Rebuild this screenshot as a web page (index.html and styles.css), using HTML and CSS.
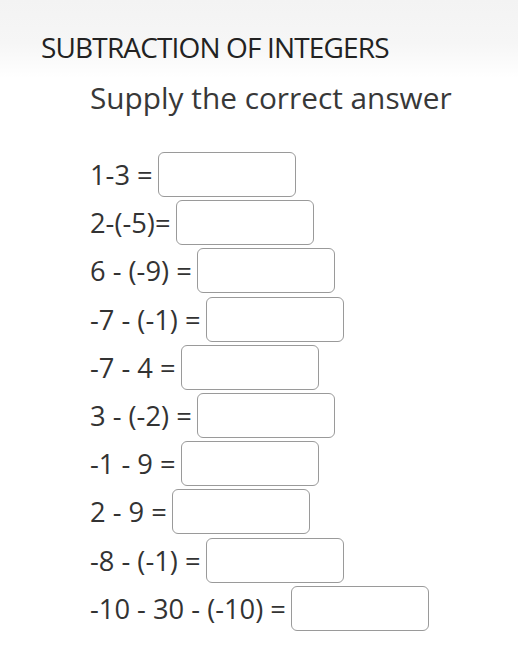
FILE: index.html
```html
<!DOCTYPE html>
<html>
<head>
<meta charset="utf-8">
<link rel="stylesheet" href="styles.css">
</head>
<body>
<div class="banner">
  <h1 class="title">SUBTRACTION OF INTEGERS</h1>
</div>
<div class="content">
  <h2 class="subtitle">Supply the correct answer</h2>
  <div class="rows">
    <div class="row"><span class="label">1-3 =</span><input class="answer" type="text"></div>
    <div class="row"><span class="label">2-(-5)=</span><input class="answer" type="text"></div>
    <div class="row"><span class="label">6 - (-9) =</span><input class="answer" type="text"></div>
    <div class="row"><span class="label">-7 - (-1) =</span><input class="answer" type="text"></div>
    <div class="row"><span class="label">-7 - 4 =</span><input class="answer" type="text"></div>
    <div class="row"><span class="label">3 - (-2) =</span><input class="answer" type="text"></div>
    <div class="row"><span class="label">-1 - 9 =</span><input class="answer" type="text"></div>
    <div class="row"><span class="label">2 - 9 =</span><input class="answer" type="text"></div>
    <div class="row"><span class="label">-8 - (-1) =</span><input class="answer" type="text"></div>
    <div class="row"><span class="label">-10 - 30 - (-10) =</span><input class="answer" type="text"></div>
  </div>
</div>
</body>
</html>
```
FILE: styles.css
```css
html, body {
  margin: 0;
  padding: 0;
}
body {
  font-family: "Open Sans", sans-serif;
  color: #333333;
  width: 518px;
  height: 657px;
  overflow: hidden;
  background-color: #ffffff;
  background-image: linear-gradient(180deg, #f3f3f3 0%, #f6f6f6 55%, #ffffff 100%);
  background-repeat: no-repeat;
  background-size: 100% 78px;
}
.banner {
  padding-left: 41px;
  padding-top: 29px;
}
.title {
  margin: 0;
  font-weight: 400;
  font-size: 28px;
  line-height: 36px;
  letter-spacing: -0.85px;
  color: #222222;
}
.content {
  padding-left: 90px;
}
.subtitle {
  margin: 0;
  margin-top: 13px;
  font-weight: 400;
  font-size: 29.8px;
  line-height: 40px;
  color: #383838;
}
.rows {
  margin-top: 34px;
  display: flex;
  flex-direction: column;
  gap: 3.2px;
}
.row {
  display: flex;
  align-items: center;
  height: 45px;
}
.label {
  font-size: 27.3px;
  white-space: pre;
  margin-right: 5px;
}
.answer {
  box-sizing: border-box;
  width: 138px;
  height: 45px;
  border: 1px solid #9a9a9a;
  border-radius: 6px;
  background: #fff;
  margin: 0;
  padding: 0;
}
```
